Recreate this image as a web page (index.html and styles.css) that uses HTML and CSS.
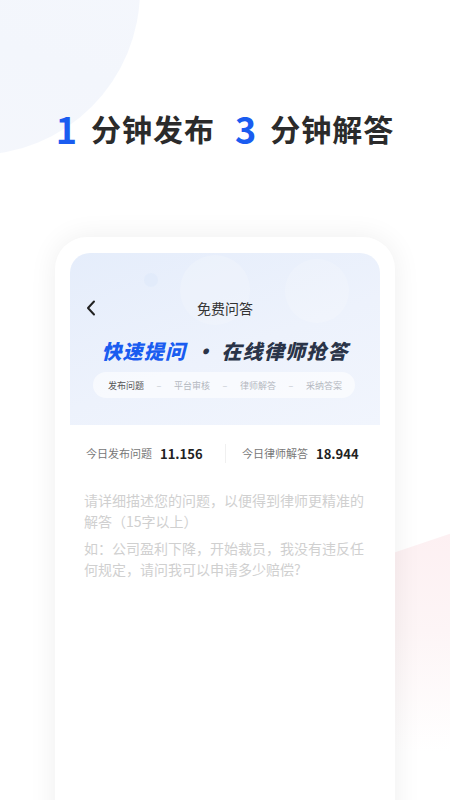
FILE: index.html
```html
<!DOCTYPE html>
<html lang="zh-CN">
<head>
  <meta charset="UTF-8">
  <meta name="viewport" content="width=device-width, initial-scale=1.0">
  <title>免费问答</title>
  <link rel="stylesheet" href="styles.css">
</head>
<body>
  <div class="blob"></div>
  <div class="ribbon"></div>

  <h1 class="headline">
    <span class="num">1</span><span class="word">分钟发布</span>
    <span class="num">3</span><span class="word">分钟解答</span>
  </h1>

  <div class="phone">
    <div class="screen">
      <div class="hero">
        <span class="bubble b1"></span>
        <span class="bubble b2"></span>
        <span class="bubble b3"></span>

        <div class="nav">
          <svg class="back" width="10" height="16" viewBox="0 0 10 16">
            <path d="M8 1.5 L2 8 L8 14.5" fill="none" stroke="#222" stroke-width="2" stroke-linecap="round" stroke-linejoin="round"/>
          </svg>
          <div class="nav-title">免费问答</div>
          <div></div>
        </div>

        <div class="slogan"><span class="blue">快速提问</span><span class="dot">·</span>在线律师抢答</div>

        <div class="steps">
          <span class="step on">发布问题</span>
          <span class="dash">–</span>
          <span class="step">平台审核</span>
          <span class="dash">–</span>
          <span class="step">律师解答</span>
          <span class="dash">–</span>
          <span class="step">采纳答案</span>
        </div>
      </div>

      <div class="card">
        <div class="stats">
          <div class="stat">
            <span class="stat-label">今日发布问题</span>
            <span class="stat-num">11.156</span>
          </div>
          <div class="stat right">
            <span class="stat-label">今日律师解答</span>
            <span class="stat-num">18.944</span>
          </div>
        </div>

        <p class="hint">请详细描述您的问题，以便得到律师更精准的解答（15字以上）</p>
        <p class="hint second">如：公司盈利下降，开始裁员，我没有违反任何规定，请问我可以申请多少赔偿?</p>
      </div>
    </div>
  </div>
</body>
</html>
```

FILE: styles.css
```css
html, body {
  margin: 0;
  padding: 0;
}
body {
  width: 450px;
  height: 800px;
  overflow: hidden;
  position: relative;
  background: #ffffff;
  font-family: "Noto Sans CJK SC", "Noto Sans", sans-serif;
  color: #222;
}

/* background decoration */
.blob {
  position: absolute;
  left: -190px;
  top: -175px;
  width: 330px;
  height: 330px;
  border-radius: 50%;
  background: linear-gradient(200deg, #f6f8fd 0%, #f3f6fc 60%, #f5f7fc 100%);
}
.ribbon {
  position: absolute;
  left: 390px;
  top: 532px;
  width: 65px;
  height: 220px;
  background: linear-gradient(180deg, #fdf0f2 0%, #fdf5f6 45%, rgba(255,255,255,0) 100%);
  clip-path: polygon(0 10%, 100% 0, 100% 100%, 0 100%);
}

.headline {
  position: relative;
  margin: 0;
  padding-top: 106px;
  height: 44px;
  line-height: 44px;
  text-align: center;
  font-weight: 700;
  font-size: 30px;
  letter-spacing: 1px;
  color: #2b2b2b;
  white-space: nowrap;
}
.headline .num {
  font-size: 36px;
  color: #1a5cf0;
  margin-right: 13px;
  vertical-align: top;
}
.headline .word + .num {
  margin-left: 12px;
}

/* phone mockup */
.phone {
  position: relative;
  width: 340px;
  height: 600px;
  margin: 87px auto 0;
  padding: 16px 15px 0;
  box-sizing: border-box;
  background: #ffffff;
  border-radius: 32px 32px 0 0;
  box-shadow: 0 0 28px rgba(0, 0, 0, 0.07);
}
.screen {
  height: 100%;
  border-radius: 20px 20px 0 0;
  overflow: hidden;
  background: #ffffff;
}

.hero {
  position: relative;
  height: 172px;
  padding-top: 44px;
  box-sizing: border-box;
  background: linear-gradient(160deg, #e5edfb 0%, #edf2fc 55%, #f1f5fd 100%);
  overflow: hidden;
}
.bubble {
  position: absolute;
  border-radius: 50%;
  background: rgba(255, 255, 255, 0.18);
}
.bubble.b1 { left: 110px; top: 2px; width: 70px; height: 70px; }
.bubble.b2 { left: 215px; top: 6px; width: 64px; height: 64px; }
.bubble.b3 { left: 74px; top: 20px; width: 14px; height: 14px; background: rgba(215,228,248,0.35); }

.nav {
  position: relative;
  display: grid;
  grid-template-columns: 40px 1fr 40px;
  align-items: center;
  height: 22px;
}
.back {
  margin-left: 16px;
}
.nav-title {
  text-align: center;
  font-size: 14px;
  color: #333;
}

.slogan {
  position: relative;
  margin-top: 18px;
  height: 28px;
  line-height: 28px;
  text-align: center;
  font-size: 20px;
  font-weight: 900;
  font-style: italic;
  letter-spacing: 1.2px;
  color: #2a3448;
}
.slogan .blue {
  color: #1a5cf0;
}
.slogan .dot {
  margin: 0 6px 0 8px;
}

.steps {
  position: relative;
  display: flex;
  justify-content: space-between;
  align-items: center;
  width: 262px;
  height: 26px;
  margin: 7px 0 0 23px;
  padding: 0 13px 0 15px;
  box-sizing: border-box;
  border-radius: 13px;
  background: rgba(255, 255, 255, 0.6);
  font-size: 9px;
  color: #b4b8c0;
}
.steps .on {
  color: #555;
}
.steps .dash {
  color: #c4c8cf;
}

.card {
  padding: 18px 14px 0;
  background: #ffffff;
  border-radius: 12px 12px 0 0;
}
.stats {
  display: grid;
  grid-template-columns: 1fr 1fr;
  height: 20px;
  align-items: center;
}
.stat {
  display: flex;
  align-items: center;
  gap: 8px;
  padding-left: 2px;
}
.stat.right {
  border-left: 1px solid #f0f0f0;
  padding-left: 16px;
}
.stat-label {
  font-size: 11px;
  color: #777;
}
.stat-num {
  font-size: 13px;
  font-weight: 700;
  color: #222;
}

.hint {
  margin: 27px 0 0;
  font-size: 14px;
  line-height: 21px;
  color: #d0d0d0;
}
.hint.second {
  margin-top: 6px;
}
```
